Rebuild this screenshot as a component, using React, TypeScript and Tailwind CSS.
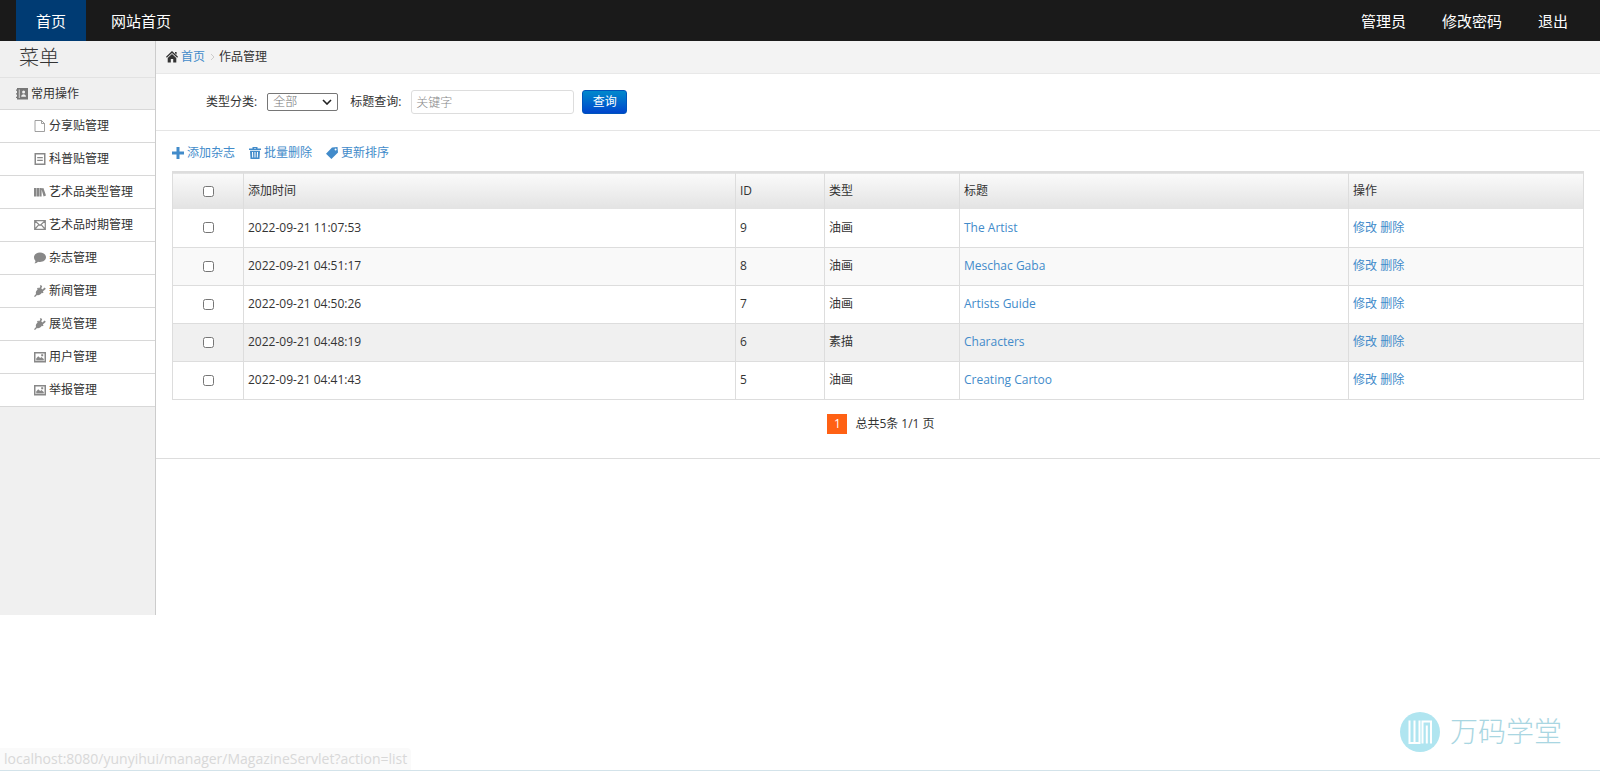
import type { ReactNode } from "react";

type Work = { id: number; time: string; type: string; title: string; active?: boolean };

const works: Work[] = [
  { id: 9, time: "2022-09-21 11:07:53", type: "油画", title: "The Artist" },
  { id: 8, time: "2022-09-21 04:51:17", type: "油画", title: "Meschac Gaba" },
  { id: 7, time: "2022-09-21 04:50:26", type: "油画", title: "Artists Guide" },
  { id: 6, time: "2022-09-21 04:48:19", type: "素描", title: "Characters", active: true },
  { id: 5, time: "2022-09-21 04:41:43", type: "油画", title: "Creating Cartoo" },
];

function Icon({ children }: { children: ReactNode }) {
  return (
    <svg viewBox="0 0 12 12" className="size-3 shrink-0" fill="currentColor" aria-hidden="true">
      {children}
    </svg>
  );
}

const plug = (
  <Icon>
    <path d="M0 11.2 2 9C1.4 7.2 2.2 5.6 3.6 4.4L3 3.6 4.2 2.6 5 3.4 6.4 1.6 5.8.8 7 0 8.2 1.4 7.2 3.2 8.4 4.4 10.6 2.6 11.8 3.8 10 5.6 8.8 6.2 9.6 7.2 8.6 8.2 7.9 7.8C6.6 9.8 4.6 10.6 3 10L1 12Z" />
  </Icon>
);

const photo = (
  <Icon>
    <path fillRule="evenodd" d="M0 1h12v10.500H0ZM1.500 2.500v7.500h9V2.500Z" />
    <path d="M2.200 9.400V7.600L4.200 5.200 6.200 7 7.400 6 9.800 8v1.400ZM7.200 3.300h2v1.900h-2Z" />
  </Icon>
);

const menu: { label: string; icon: ReactNode }[] = [
  {
    label: "分享贴管理",
    icon: (
      <Icon>
        <path d="M1 .5h6.500l3 3v8H1ZM7.500.5v3h3" fill="none" stroke="currentColor" strokeWidth=".8" />
      </Icon>
    ),
  },
  {
    label: "科普贴管理",
    icon: (
      <Icon>
        <path fillRule="evenodd" d="M.5 0h11v12H.5ZM2 1.500v9h8v-9Z" />
        <path d="M3.200 4h5.600v1.300H3.200ZM3.200 6.700h5.600V8H3.200Z" />
      </Icon>
    ),
  },
  {
    label: "艺术品类型管理",
    icon: (
      <Icon>
        <path d="M0 2h2.500v8.500H0ZM2.900 2h2.300v8.500H2.900ZM5.600 2h2v8.500h-2ZM7.300 2.400 9.400 2 12 9.600 9.600 10.500Z" />
      </Icon>
    ),
  },
  {
    label: "艺术品时期管理",
    icon: (
      <Icon>
        <path
          d="M.7 1.600h10.600v8.800H.7ZM1 2l5 4.400L11 2M1 10l3.700-4.200M11 10 7.300 5.800"
          fill="none"
          stroke="currentColor"
          strokeWidth="1.200"
        />
      </Icon>
    ),
  },
  {
    label: "杂志管理",
    icon: (
      <Icon>
        <path d="M6 .6c3.400 0 6 2 6 4.700S9.400 10 6 10c-.7 0-1.300 0-2-.2-1 1-2.300 1.500-3.600 1.500.7-.7 1.100-1.500 1.100-2.400C.6 8 0 6.800 0 5.300 0 2.600 2.600.6 6 .6Z" />
      </Icon>
    ),
  },
  { label: "新闻管理", icon: plug },
  { label: "展览管理", icon: plug },
  { label: "用户管理", icon: photo },
  { label: "举报管理", icon: photo },
];

function TopBar() {
  return (
    <header className="flex h-[41px] items-stretch justify-between bg-[#1a1a1a] pr-3.5 pl-4 text-[15px] text-white">
      <nav className="flex">
        <a href="#" className="flex items-center bg-[#003b73] px-5">首页</a>
        <a href="#" className="flex items-center px-[25px]">网站首页</a>
      </nav>
      <nav className="flex">
        <a href="#" className="flex items-center px-[18px]">管理员</a>
        <a href="#" className="flex items-center px-[18px]">修改密码</a>
        <a href="#" className="flex items-center px-[18px]">退出</a>
      </nav>
    </header>
  );
}

function Sidebar() {
  return (
    <aside className="w-[156px] shrink-0 border-r border-[#ccc] bg-[#f0f0f0] pb-[208px]">
      <h1 className="h-9 pl-[19px] text-xl leading-[34px] font-light">菜单</h1>
      <div className="flex h-8 items-center gap-[3px] border-t border-[#e2e2e2] pl-4">
        <span className="text-[#777]">
          <Icon>
            <path
              fillRule="evenodd"
              d="M1 0h11v11.500H1V10H0V8.800h1V6.400H0V5.200h1V2.800H0V1.600h1ZM2.800 1.500V10h.8V1.500ZM7.600 2.600a1.500 1.500 0 1 0 0 3 1.500 1.500 0 1 0 0-3ZM5.200 8.800H10C10 7 9 6.200 7.600 6.200S5.200 7 5.200 8.800Z"
            />
          </Icon>
        </span>
        常用操作
      </div>
      <ul>
        {menu.map((item) => (
          <li key={item.label} className="h-[33px] border-t border-[#d8d8d8] bg-white last:h-[34px] last:border-b">
            <a href="#" className="flex h-8 items-center gap-[3px] pl-[34px]">
              <span className="text-[#888]">{item.icon}</span>
              {item.label}
            </a>
          </li>
        ))}
      </ul>
    </aside>
  );
}

function Breadcrumb() {
  return (
    <div className="flex h-[33px] items-center border-b border-[#e8e8e8] bg-[#f3f3f3] pl-2.5">
      <Icon>
        <path d="M6 0 12 5.800 11.200 6.700 6 1.900.8 6.700 0 5.800ZM9 1h1.600v2.800L9 2.300ZM6 3l4.300 4v4.500H7.200V8H4.800v3.500H1.700V7Z" />
      </Icon>
      <a href="#" className="ml-[3px] text-[#428bca]">首页</a>
      <svg viewBox="0 0 6 8" className="mx-1 h-2 w-1.5" fill="none" stroke="#ccc" aria-hidden="true">
        <path d="m2 1 3 3-3 3" />
      </svg>
      <span>作品管理</span>
    </div>
  );
}

function SearchForm() {
  return (
    <form className="flex h-[57px] items-center border-b border-[#e5e5e5] pl-[50px]">
      <label htmlFor="type">类型分类:</label>
      <div className="relative ml-2.5 flex">
        <select
          id="type"
          className="h-[18px] w-[71px] appearance-none rounded-xs border border-[#767676] bg-white pl-[5px] leading-4 font-light text-[#777]"
        >
          <option>全部</option>
        </select>
        <svg
          viewBox="0 0 10 6"
          className="pointer-events-none absolute top-1.5 right-1.5 h-1.5 w-2.5"
          fill="none"
          stroke="#222"
          strokeWidth="1.6"
          aria-hidden="true"
        >
          <path d="m1 1 4 4 4-4" />
        </svg>
      </div>
      <label htmlFor="keyword" className="ml-3">标题查询:</label>
      <input
        id="keyword"
        type="text"
        placeholder="关键字"
        className="ml-2.5 h-6 w-[163px] rounded-[3px] border border-[#ddd] px-1 font-light placeholder:text-[#888]"
      />
      <button
        type="button"
        className="ml-2 h-6 w-[45px] rounded-[3px] border border-[#0055bb] bg-linear-to-b from-[#0088cc] to-[#0044cc] text-white"
      >
        查询
      </button>
    </form>
  );
}

function Toolbar() {
  return (
    <div className="flex h-10 items-center gap-3.5 pt-1 text-[#428bca]">
      <a href="#" className="flex items-center gap-[3px]">
        <Icon>
          <path d="M4.500 0h3v4.500H12v3H7.500V12h-3V7.500H0v-3h4.500Z" />
        </Icon>
        添加杂志
      </a>
      <a href="#" className="flex items-center gap-[3px]">
        <Icon>
          <path
            fillRule="evenodd"
            d="M3.500 0h5v1.500H12v1.600H0V1.500h3.500ZM5 1v.5h2V1ZM1 3.800h10L10.500 12h-9ZM3 5l.2 5.600h1L4 5ZM5.500 5v5.600h1V5ZM8 5l-.2 5.600h1L9 5Z"
          />
        </Icon>
        批量删除
      </a>
      <a href="#" className="flex items-center gap-[3px]">
        <Icon>
          <path fillRule="evenodd" d="M6 .6 11.500 0 12 5.400 5.400 12 0 6.800ZM9.600 1.400a1 1 0 1 0 0 2 1 1 0 1 0 0-2Z" />
        </Icon>
        更新排序
      </a>
    </div>
  );
}

function WorksTable() {
  return (
    <table className="w-full table-fixed border-collapse border border-[#ddd] text-left">
      <thead>
        <tr className="h-[37px] border-t-2 border-[#ddd] bg-linear-to-b from-[#fafafa] to-[#e3e3e3] *:border-r *:border-[#ddd] *:px-1 *:font-normal">
          <th className="w-[71px]">
            <input type="checkbox" aria-label="全选" className="mx-auto block size-[11px]" />
          </th>
          <th>添加时间</th>
          <th className="w-[89px]">ID</th>
          <th className="w-[135px]">类型</th>
          <th className="w-[389px]">标题</th>
          <th className="w-[235px]">操作</th>
        </tr>
      </thead>
      <tbody>
        {works.map((w) => (
          <tr
            key={w.id}
            className={`h-[38px] border-b border-[#ddd] *:border-r *:border-[#ddd] *:px-1 ${
              w.active ? "bg-[#f0f0f0]" : "odd:bg-white even:bg-[#f9f9f9]"
            }`}
          >
            <td>
              <input type="checkbox" aria-label={w.title} className="mx-auto block size-[11px]" />
            </td>
            <td>{w.time}</td>
            <td>{w.id}</td>
            <td>{w.type}</td>
            <td>
              <a href="#" className="text-[#428bca]">{w.title}</a>
            </td>
            <td>
              <a href="#" className="text-[#428bca]">修改</a>{" "}
              <a href="#" className="text-[#428bca]">删除</a>
            </td>
          </tr>
        ))}
      </tbody>
    </table>
  );
}

function Watermark() {
  return (
    <div className="absolute right-[38px] bottom-[18px] flex items-center gap-2.5 text-[28px] font-light text-[#a9d6e2]">
      <svg viewBox="0 0 40 40" className="size-10" aria-hidden="true">
        <circle cx="20" cy="20" r="20" fill="#b0e5f0" />
        <path
          d="M9.500 8.500v22.500h10V8.500M14.500 8.500v22.500M22.500 31.500V9.500h8.500v22M26.800 13.500v18"
          fill="none"
          stroke="#fff"
          strokeWidth="2"
        />
      </svg>
      万码学堂
    </div>
  );
}

export default function App() {
  return (
    <div className="relative flex min-h-screen flex-col border-b border-[#d3e3ea] bg-white font-['Open_Sans','Noto_Sans_CJK_SC',sans-serif] text-xs text-[#333]">
      <TopBar />
      <div className="flex items-start">
        <Sidebar />
        <main className="min-w-0 flex-1">
          <Breadcrumb />
          <SearchForm />
          <section className="border-b border-[#ddd] px-4 pb-6">
            <Toolbar />
            <WorksTable />
            <div className="mt-3.5 flex items-center justify-center gap-2 pl-1.5">
              <a href="#" className="size-5 bg-[#ff6114] text-center leading-5 text-white">1</a>
              <span>总共5条 1/1 页</span>
            </div>
          </section>
        </main>
      </div>
      <div className="absolute bottom-0 left-0 rounded-tr-sm bg-[#fafafa] px-1 text-sm leading-[22px] text-[#d8d8d8]">
        localhost:8080/yunyihui/manager/MagazineServlet?action=list
      </div>
      <Watermark />
    </div>
  );
}
